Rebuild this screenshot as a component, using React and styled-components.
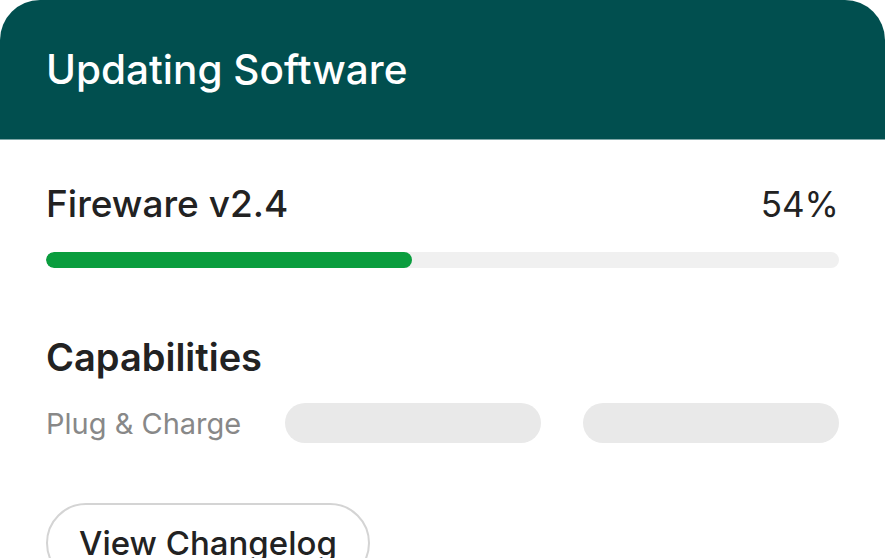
import React from "react";
import styled, { createGlobalStyle } from "styled-components";

const Global = createGlobalStyle`
  html, body { margin: 0; padding: 0; background: #ffffff; }
  body { font-family: Inter, "Noto Sans", "Liberation Sans", sans-serif; overflow: hidden; }
`;

const Card = styled.div`
  width: 885px;
  height: 558px;
  background: #ffffff;
  border-radius: 40px 40px 0 0;
  overflow: hidden;
  display: flex;
  flex-direction: column;
`;

const Header = styled.header`
  flex-shrink: 0;
  height: 139px;
  background: #014f4f;
  border-bottom: 1px solid #7fa7a7;
  display: flex;
  align-items: center;
  padding: 0 46px;
`;

const Title = styled.h1`
  margin: 0;
  color: #ffffff;
  font-size: 40.5px;
  font-weight: 500;
  line-height: 1;
  padding-top: 2px;
`;

const Body = styled.div`
  flex-shrink: 0;
  padding: 44px 46px 0;
  display: flex;
  flex-direction: column;
`;

const Row = styled.div`
  display: flex;
  justify-content: space-between;
  align-items: center;
`;

const Label = styled.div`
  color: #222222;
  font-size: ${(p) => p.$size || 37}px;
  font-weight: ${(p) => p.$weight || 500};
  line-height: 40px;
`;

const Track = styled.div`
  margin-top: 28px;
  height: 16px;
  border-radius: 8px;
  background: #f0f0f0;
  overflow: hidden;
`;

const Fill = styled.div`
  height: 100%;
  border-radius: 8px;
  background: #0a9d3e;
`;

const Section = styled.div`
  margin-top: 69px;
  display: flex;
  flex-direction: column;
`;

const CapRow = styled.div`
  margin-top: 26px;
  display: grid;
  grid-template-columns: 197px 256px 256px;
  column-gap: 42px;
  align-items: center;
`;

const CapName = styled.div`
  color: #888888;
  font-size: 29px;
  font-weight: 400;
`;

const Pill = styled.div`
  height: 40px;
  border-radius: 20px;
  background: #e9e9e9;
`;

const Button = styled.button`
  margin-top: 60px;
  align-self: flex-start;
  height: 80px;
  padding: 0 31px;
  border: 2px solid #d4d4d4;
  border-radius: 40px;
  background: #ffffff;
  color: #222222;
  font-family: inherit;
  font-size: 33px;
  font-weight: 500;
  line-height: 1;
`;

export default function App() {
  const progress = 46.2;
  return (
    <>
      <Global />
      <Card>
        <Header>
          <Title>Updating Software</Title>
        </Header>
        <Body>
          <Row>
            <Label>Fireware v2.4</Label>
            <Label $weight={400} $size={35}>54%</Label>
          </Row>
          <Track>
            <Fill style={{ width: `${progress}%` }} />
          </Track>
          <Section>
            <Label $weight={600} $size={38}>Capabilities</Label>
            <CapRow>
              <CapName>Plug &amp; Charge</CapName>
              <Pill />
              <Pill />
            </CapRow>
          </Section>
          <Button>View Changelog</Button>
        </Body>
      </Card>
    </>
  );
}
